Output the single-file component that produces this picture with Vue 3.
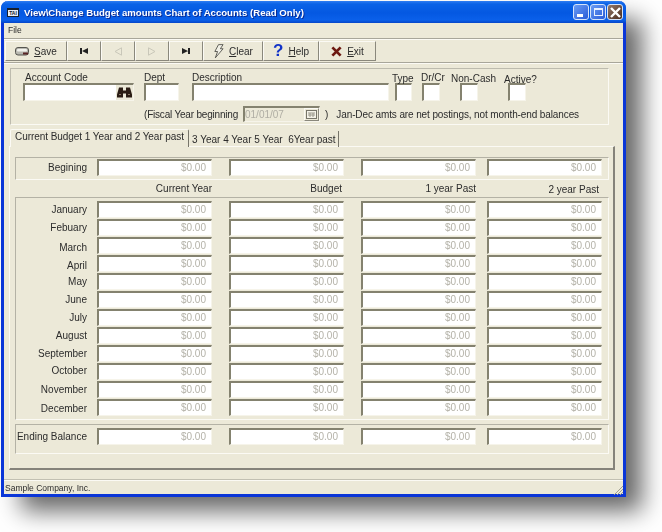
<template>
  <div class="page">
    <div class="window">
      <div class="titlebar">
        <div class="appicon">TAI</div>
        <span class="title">View\Change Budget amounts Chart of Accounts (Read Only)</span>
        <div class="winbtns">
          <div class="winbtn"><span class="min"></span></div>
          <div class="winbtn"><span class="max"></span></div>
          <div class="winbtn close">
            <svg width="13" height="13" viewBox="0 0 13 13">
              <path d="M2 2l9 9M11 2l-9 9" stroke="#fff" stroke-width="2.4" />
            </svg>
          </div>
        </div>
      </div>

      <div class="menubar"><span>File</span></div>

      <div class="toolbar">
        <button class="tool" style="width: 62px">
          <svg width="14" height="9" viewBox="0 0 14 9">
            <rect x="0.5" y="0.5" width="13" height="7.5" rx="2.5" fill="#b8b8b0" stroke="#55554f" />
            <rect x="2" y="2" width="10" height="2.5" rx="1" fill="#f2f2ec" />
            <rect x="8" y="5.5" width="5" height="2" fill="#5a2424" />
          </svg>
          <span><u>S</u>ave</span>
        </button>
        <button class="tool" style="width: 34px">
          <svg width="8" height="6" viewBox="0 0 8 6"><path d="M0 0h2v6H0zM8 0v6L2 3z" fill="#222" /></svg>
        </button>
        <button class="tool" style="width: 34px">
          <svg width="8" height="9" viewBox="0 0 8 9"><path d="M7.5 .8v7.4L1 4.5z" fill="none" stroke="#c9c7b9" /></svg>
        </button>
        <button class="tool" style="width: 34px">
          <svg width="8" height="9" viewBox="0 0 8 9"><path d="M.5 .8v7.4L7 4.5z" fill="none" stroke="#c9c7b9" /></svg>
        </button>
        <button class="tool" style="width: 34px">
          <svg width="8" height="6" viewBox="0 0 8 6"><path d="M0 0v6l6-3zM6 0h2v6H6z" fill="#222" /></svg>
        </button>
        <button class="tool" style="width: 60px">
          <svg width="11" height="15" viewBox="0 0 12 16">
            <path d="M6 .5h5L8 5h3L2.5 15 5 8H2z" fill="#f1f0e6" stroke="#55554f" />
          </svg>
          <span><u>C</u>lear</span>
        </button>
        <button class="tool" style="width: 56px">
          <span class="qmark">?</span>
          <span><u>H</u>elp</span>
        </button>
        <button class="tool" style="width: 57px">
          <svg width="11" height="11" viewBox="0 0 12 12">
            <path d="M1.5 1.5l9 9M10.5 1.5l-9 9" stroke="#6e1a12" stroke-width="3" />
          </svg>
          <span><u>E</u>xit</span>
        </button>
      </div>

      <div class="panel">
        <div class="fieldrow">
          <div class="field account">
            <label>Account Code</label>
            <div class="input tall lookup">
              <svg width="15" height="12" viewBox="0 0 15 12">
                <path d="M2 1h4v3h3V1h4l2 7v3H9V7H6v4H0V8z" fill="#2a1c14" />
                <path d="M2 8h2M11 8h2" stroke="#8a7a68" stroke-width="1" />
              </svg>
            </div>
          </div>
          <div class="field dept">
            <label>Dept</label>
            <div class="input tall"></div>
          </div>
          <div class="field desc">
            <label>Description</label>
            <div class="input tall"></div>
          </div>
          <div class="field type">
            <label>Type</label>
            <div class="input tall"></div>
          </div>
          <div class="field drcr">
            <label>Dr/Cr</label>
            <div class="input tall"></div>
          </div>
          <div class="field noncash">
            <label>Non-Cash</label>
            <div class="input tall"></div>
          </div>
          <div class="field active">
            <label>Active?</label>
            <div class="input tall"></div>
          </div>
        </div>
        <div class="fiscal">
          <span class="fy">(Fiscal Year beginning</span>
          <div class="input date">
            <span>01/01/07</span>
            <span class="calbtn">
              <svg width="11" height="9" viewBox="0 0 11 9">
                <rect x="0.5" y="0.5" width="10" height="8" fill="#f4f2e8" stroke="#77756a" />
                <path d="M2 3h7M2 5h7M4 3v4M7 3v4" stroke="#9a988c" stroke-width="1" />
              </svg>
            </span>
          </div>
          <span class="paren">)</span>
          <span class="note">Jan-Dec amts are net postings, not month-end balances</span>
        </div>
      </div>

      <div class="tabs">
        <div class="tab on">Current Budget 1 Year and 2 Year past</div>
        <div class="tab">3 Year 4 Year 5 Year&nbsp; 6Year past</div>
      </div>

      <div class="pane">
        <div class="group first">
          <div class="grid">
            <div class="rowlabel">Begining</div>
            <div v-for="c in 4" :key="c" class="input money">$0.00</div>
          </div>
        </div>

        <div class="heads">
          <div v-for="h in heads" :key="h.name" :class="h.cls">{{ h.name }}</div>
        </div>

        <div class="group months">
          <div v-for="m in months" :key="m.name" class="grid month">
            <div class="rowlabel" :style="{ top: m.dy + 'px' }">{{ m.name }}</div>
            <div v-for="c in 4" :key="c" class="input money">$0.00</div>
          </div>
        </div>

        <div class="group ending">
          <div class="grid">
            <div class="rowlabel">Ending Balance</div>
            <div v-for="c in 4" :key="c" class="input money">$0.00</div>
          </div>
        </div>
      </div>

      <div class="status">
        <span>Sample Company, Inc.</span>
        <svg class="grip" width="10" height="10" viewBox="0 0 10 10">
          <path d="M10 1L1 10M10 4L4 10M10 7L7 10" stroke="#a09e90" stroke-width="1" />
        </svg>
      </div>
    </div>
  </div>
</template>

<script setup>
const heads = [
  { name: 'Current Year', cls: 'h1' },
  { name: 'Budget', cls: 'h2' },
  { name: '1 year Past', cls: 'h3' },
  { name: '2 year Past', cls: 'h4' }
]

const months = [
  { name: 'January', dy: 0 },
  { name: 'Febuary', dy: 0 },
  { name: 'March', dy: 2 },
  { name: 'April', dy: 2 },
  { name: 'May', dy: 0 },
  { name: 'June', dy: 0 },
  { name: 'July', dy: 0 },
  { name: 'August', dy: 0 },
  { name: 'September', dy: 0 },
  { name: 'October', dy: -1 },
  { name: 'November', dy: 0 },
  { name: 'December', dy: 1 }
]
</script>

<style>
html,
body {
  background: #fff;
  overflow: hidden;
}
</style>

<style scoped>
.page {
  width: 662px;
  height: 532px;
  padding: 1px 0 0 1px;
  box-sizing: border-box;
  font-family: "Liberation Sans", Arial, sans-serif;
  font-size: 10px;
  color: #2c2c2c;
  overflow: hidden;
}

.window {
  width: 625px;
  height: 496px;
  box-sizing: border-box;
  background: #ece9d8;
  border: 3px solid #0a36d8;
  border-top: 0;
  border-radius: 7px 7px 0 0;
  box-shadow: 18px 16px 24px -2px rgba(0, 0, 0, 0.6);
  display: flex;
  flex-direction: column;
  filter: blur(0.3px);
}

.titlebar {
  height: 22px;
  margin: 0 -3px;
  padding: 0 3px 0 6px;
  flex: none;
  display: flex;
  align-items: center;
  border-radius: 7px 7px 0 0;
  background: linear-gradient(#2f7df2 0, #0a62e6 3px, #0458e2 12px, #0a60ea 19px, #0646c8 22px);
}

.appicon {
  width: 12px;
  height: 9px;
  margin-right: 5px;
  box-sizing: border-box;
  background: #e8eef6;
  border: 1px solid #16202e;
  border-top-width: 2px;
  color: #16202e;
  font-size: 5px;
  font-weight: bold;
  line-height: 6px;
  text-align: center;
  overflow: hidden;
}

.title {
  color: #fff;
  font-size: 9.6px;
  font-weight: bold;
  text-shadow: 1px 1px 0 #0a2a90;
  white-space: nowrap;
}

.winbtns {
  margin-left: auto;
  display: flex;
  gap: 1px;
}

.winbtn {
  width: 16px;
  height: 16px;
  box-sizing: border-box;
  border: 1px solid #d6e4fa;
  border-radius: 3px;
  background: linear-gradient(135deg, #6a9cf4, #2a5cd8);
  display: flex;
  align-items: center;
  justify-content: center;
  position: relative;
}

.winbtn.close {
  background: linear-gradient(135deg, #94796a, #4a2c1e);
}

.min {
  position: absolute;
  left: 3px;
  bottom: 2px;
  width: 6px;
  height: 3px;
  background: #fff;
}

.max {
  width: 9px;
  height: 8px;
  border: 1px solid #e8f0ff;
  border-top-width: 2px;
  box-sizing: border-box;
}

.menubar {
  height: 15px;
  flex: none;
  padding-left: 4px;
  font-size: 8.5px;
  line-height: 15px;
}

.toolbar {
  height: 25px;
  flex: none;
  box-sizing: border-box;
  padding: 2px 0 0 1px;
  display: flex;
  border-top: 1px solid #a8a69a;
  border-bottom: 1px solid #a8a69a;
  box-shadow: inset 0 1px 0 #fbfaf4, 0 1px 0 #fbfaf4;
}

.tool {
  height: 20px;
  padding: 0;
  box-sizing: border-box;
  flex: none;
  display: flex;
  align-items: center;
  justify-content: center;
  gap: 5px;
  background: #ece9d8;
  border: 1px solid;
  border-color: #fbfaf4 #8a887c #8a887c #fbfaf4;
  font: inherit;
  color: #2c2c2c;
}

.qmark {
  color: #1233c8;
  font-size: 17px;
  font-weight: bold;
  line-height: 16px;
}

.panel {
  width: 599px;
  height: 57px;
  flex: none;
  box-sizing: border-box;
  margin: 5px 0 0 6px;
  border: 1px solid;
  border-color: #bdbbae #fbfaf4 #fbfaf4 #bdbbae;
  padding-top: 3px;
}

.fieldrow {
  display: flex;
}

.field {
  flex: none;
}

.field label {
  display: block;
  height: 11px;
  line-height: 11px;
  white-space: nowrap;
}

.account { width: 111px; margin-left: 12px; }
.account label { padding-left: 2px; }
.dept { width: 35px; margin-left: 10px; }
.desc { width: 197px; margin-left: 13px; }
.type { width: 17px; margin-left: 6px; }
.type label { margin-left: -3px; position: relative; top: 1px; }
.drcr { width: 18px; margin-left: 10px; }
.drcr label { margin-left: -1px; }
.noncash { width: 18px; margin-left: 20px; }
.noncash label { margin-left: -9px; position: relative; top: 1px; }
.active { width: 18px; margin-left: 30px; }
.active label { margin-left: -4px; position: relative; top: 2px; }

.input {
  box-sizing: border-box;
  background: #fff;
  border: 1px solid;
  border-color: #84826f #f6f4ea #f6f4ea #84826f;
  border-top-width: 2px;
  border-left-width: 2px;
}

.tall {
  height: 18px;
}

.lookup {
  display: flex;
  align-items: center;
  justify-content: flex-end;
}

.lookup svg {
  background: #ece9d8;
  height: 15px;
  padding: 0 1px;
}

.fiscal {
  display: flex;
  align-items: center;
  margin-top: 5px;
  margin-left: 133px;
  height: 16px;
  white-space: nowrap;
}

.fy {
  width: 96px;
  letter-spacing: -0.2px;
}

.date {
  width: 77px;
  height: 16px;
  margin-left: 3px;
  display: flex;
  align-items: center;
  justify-content: space-between;
  color: #b0aea4;
  background: #ece9d8;
}

.calbtn {
  width: 15px;
  height: 13px;
  background: #ece9d8;
  display: flex;
  align-items: center;
  justify-content: center;
  border: 1px solid;
  border-color: #fbfaf4 #8a887c #8a887c #fbfaf4;
  box-sizing: border-box;
}

.paren {
  margin-left: 5px;
}

.note {
  margin-left: 8px;
  letter-spacing: -0.11px;
}

.tabs {
  height: 18px;
  flex: none;
  margin: 4px 0 0 6px;
  display: flex;
  position: relative;
  z-index: 1;
}

.tab {
  height: 16px;
  margin-top: 2px;
  padding: 3px 2px 0 3px;
  box-sizing: border-box;
  border-right: 1px solid #77756a;
  white-space: nowrap;
}

.tab.on {
  height: 18px;
  margin-top: 0;
  width: 179px;
  padding: 1px 0 0 4px;
  letter-spacing: -0.06px;
  background: #ece9d8;
  border: 1px solid #fbfaf4;
  border-bottom: 0;
  border-right: 1px solid #77756a;
  border-radius: 2px 2px 0 0;
}

.pane {
  width: 606px;
  height: 324px;
  flex: none;
  box-sizing: border-box;
  margin: -1px 0 0 5px;
  padding: 10px 0 0 5px;
  border: 1px solid;
  border-color: #fbfaf4 #85837a #85837a #fbfaf4;
  border-bottom-width: 2px;
  border-right-width: 2px;
}

.group {
  width: 594px;
  box-sizing: border-box;
  border: 1px solid;
  border-color: #b4b2a5 #fbfaf4 #fbfaf4 #b4b2a5;
}

.first {
  height: 23px;
  padding-top: 1px;
}

.heads {
  width: 594px;
  height: 17px;
  position: relative;
}

.heads div {
  position: absolute;
  top: 3px;
  line-height: 12px;
  white-space: nowrap;
}

.h1 { right: 397px; }
.h2 { right: 267px; }
.h3 { right: 133px; }
.h4 { right: 10px; top: 4px !important; }

.months {
  height: 223px;
  padding-top: 3px;
}

.ending {
  height: 30px;
  margin-top: 4px;
  padding-top: 3px;
}

.grid {
  display: grid;
  grid-template-columns: 81px 132px 132px 126px 115px;
  height: 17px;
}

.month {
  height: 18px;
}

.rowlabel {
  position: relative;
  text-align: right;
  padding-right: 10px;
  line-height: 17px;
  white-space: nowrap;
}

.money {
  width: 115px;
  height: 17px;
  text-align: right;
  padding-right: 5px;
  line-height: 14px;
  color: #b4b2a8;
}

.status {
  height: 15px;
  flex: none;
  margin-top: 9px;
  padding-left: 1px;
  display: flex;
  align-items: center;
  justify-content: space-between;
  font-size: 8.5px;
  border-top: 1px solid #c2c0b2;
  box-shadow: inset 0 1px 0 #fbfaf4;
}

.grip {
  align-self: flex-end;
}
</style>
